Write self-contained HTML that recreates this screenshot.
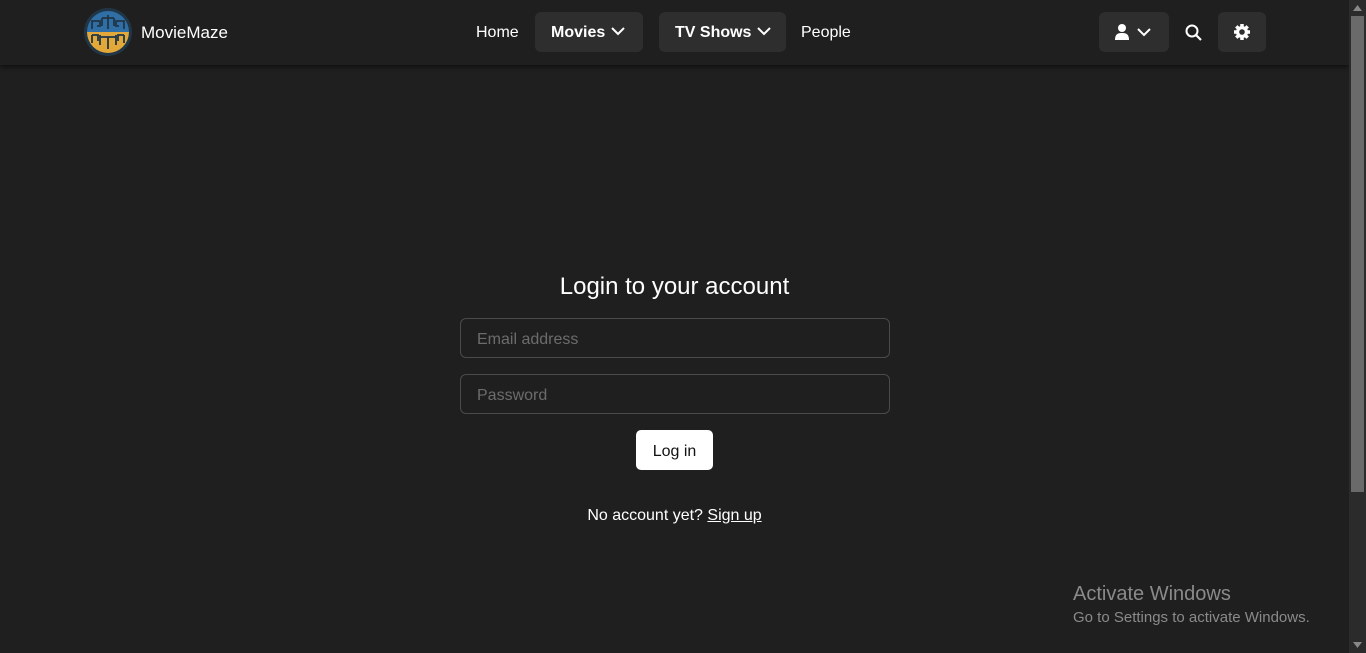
<!DOCTYPE html>
<html><head><meta charset="utf-8"><style>
*{box-sizing:border-box;margin:0;padding:0}
body{width:1366px;height:653px;background:#1f1f1f;font-family:"Liberation Sans",sans-serif;color:#fff;position:relative;overflow:hidden}
.hdr{position:absolute;left:0;top:0;width:1349px;height:65px;background:#1f1f1f;box-shadow:0 2px 4px rgba(0,0,0,.5)}
.logo{position:absolute;left:83px;top:7px}
.brand{position:absolute;left:141px;top:23px;font-size:17px}
.nav{position:absolute;top:12px;height:40px;line-height:42px;font-size:16px;border-radius:6px;text-align:left}
.btn{background:#2e2e2e;font-weight:bold}
.chev{display:inline-block;vertical-align:middle;margin-left:6px;margin-top:-3px}
.sb{position:absolute;right:0;top:0;width:17px;height:653px;background:#2b2b2b}
.thumb{position:absolute;left:2px;top:16px;width:13px;height:476px;background:#6a6a6a}
h1{position:absolute;top:273px;left:0;width:1349px;text-align:center;font-weight:normal;font-size:24px}
.inp{position:absolute;left:460px;width:430px;height:40px;border:1px solid #4a4a4a;border-radius:6px;color:#6c6c6c;font-size:16px;padding:12px 16px 0}
.login{position:absolute;left:636px;top:430px;width:77px;height:40px;background:#fff;color:#111;border-radius:5px;font-size:16px;text-align:center;line-height:43px}
.no{position:absolute;top:507px;left:0;width:1349px;text-align:center;font-size:16px}
.win{position:absolute;left:1073px;top:583px;color:#8a8a8a}
</style></head><body>
<div class="hdr">
<svg class="logo" width="50" height="50" viewBox="0 0 50 50"><circle cx="25" cy="25" r="24" fill="#203647"/><path d="M4 25a21 21 0 0 1 42 0z" fill="#2f6fa6"/><path d="M4 25a21 21 0 0 0 42 0z" fill="#e2a93a"/><g fill="none" stroke="#203647" stroke-width="1.8"><path d="M9 22v-8h8v5h-3M41 22v-8h-8v5h3M25 8v14M19 11h12M19 11v8M31 11v8M9 28v8M41 28v8M17 28v10M33 28v10M17 30h16M25 30v12M9 28h6v6M41 28h-6v6"/></g></svg>
<div class="brand">MovieMaze</div>
<div class="nav" style="left:476px">Home</div>
<div class="nav btn" style="left:535px;width:108px;padding-left:16px">Movies<svg class="chev" width="14" height="10" viewBox="0 0 14 10"><path d="M1 2l6 6 6-6" stroke="#fff" stroke-width="2" fill="none"/></svg></div>
<div class="nav btn" style="left:659px;width:127px;padding-left:16px">TV Shows<svg class="chev" width="14" height="10" viewBox="0 0 14 10"><path d="M1 2l6 6 6-6" stroke="#fff" stroke-width="2" fill="none"/></svg></div>
<div class="nav" style="left:801px">People</div>
<div class="nav btn" style="left:1099px;width:70px"><svg style="position:absolute;left:16px;top:12px" width="38" height="16" viewBox="0 0 38 16"><circle cx="7" cy="4" r="4" fill="#fff"/><path d="M0 16c0-6 3-7 7-7s7 1 7 7z" fill="#fff"/><path d="M23 5l6 6 6-6" stroke="#fff" stroke-width="2" fill="none"/></svg></div>
<svg style="position:absolute;left:1185px;top:24px" width="18" height="18" viewBox="0 0 18 18"><circle cx="7" cy="7" r="5.5" stroke="#fff" stroke-width="2" fill="none"/><path d="M11 11l5 5" stroke="#fff" stroke-width="2.2"/></svg>
<div class="nav btn" style="left:1218px;width:48px"><svg style="position:absolute;left:15px;top:11px" width="18" height="18" viewBox="0 0 18 18"><g fill="#fff"><circle cx="9" cy="9" r="6"/><g stroke="#fff" stroke-width="3.5"><path d="M9 1v16M1 9h16M3.3 3.3l11.4 11.4M14.7 3.3L3.3 14.7"/></g></g><circle cx="9" cy="9" r="2.8" fill="#2e2e2e"/></svg></div>
</div>
<h1>Login to your account</h1>
<div class="inp" style="top:318px">Email address</div>
<div class="inp" style="top:374px">Password</div>
<div class="login">Log in</div>
<div class="no">No account yet? <u>Sign up</u></div>
<div class="win"><div style="font-size:20px">Activate Windows</div><div style="font-size:15px;margin-top:3px">Go to Settings to activate Windows.</div></div>
<div class="sb"><div class="thumb"></div><svg style="position:absolute;left:4px;top:5px" width="9" height="6"><path d="M0 6L4.5 0 9 6z" fill="#888"/></svg><svg style="position:absolute;left:4px;top:642px" width="9" height="6"><path d="M0 0L4.5 6 9 0z" fill="#888"/></svg></div>
</body></html>
